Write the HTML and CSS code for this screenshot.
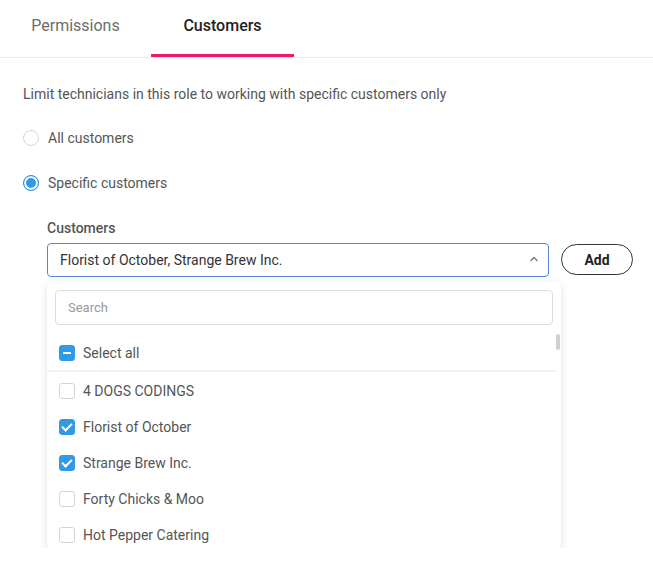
FILE: index.html
```html
<!DOCTYPE html>
<html lang="en">
  <head>
    <meta charset="UTF-8" />
    <meta name="viewport" content="width=device-width, initial-scale=1.0" />
    <title>Role Customers</title>
    <link rel="stylesheet" href="styles.css">
  </head>
  <body>
    <div class="tabs">
      <div class="tab">Permissions</div>
      <div class="tab active">Customers</div>
    </div>

    <section class="content">
      <p class="intro">Limit technicians in this role to working with specific customers only</p>

      <div class="radio">
        <span class="radio-dot"></span>
        All customers
      </div>
      <div class="radio">
        <span class="radio-dot checked"></span>
        Specific customers
      </div>

      <div class="field">
        <div class="field-label">Customers</div>
        <div class="field-row">
          <div class="picker">
            <div class="current">
              <span>Florist of October, Strange Brew Inc.</span>
              <svg class="chevron" width="10" height="6" viewBox="0 0 10 6">
                <path d="M1.5 5 L5 1.5 L8.5 5" fill="none" stroke="#777" stroke-width="1.3" />
              </svg>
            </div>
            <div class="dropdown">
              <div class="search">Search</div>
              <div class="option all-row">
                <span class="box partial"></span>
                Select all
              </div>
              <div class="list">
                <div class="option"><span class="box"></span>4 DOGS CODINGS</div>
                <div class="option"><span class="box checked"></span>Florist of October</div>
                <div class="option"><span class="box checked"></span>Strange Brew Inc.</div>
                <div class="option"><span class="box"></span>Forty Chicks &amp; Moo</div>
                <div class="option"><span class="box"></span>Hot Pepper Catering</div>
              </div>
              <div class="scroll-thumb"></div>
            </div>
          </div>
          <button class="add-btn">Add</button>
        </div>
      </div>
    </section>
  </body>
</html>
```

FILE: styles.css
```css
body {
  margin: 0;
  font-family: Roboto, "Liberation Sans", sans-serif;
  font-size: 14px;
  color: #555;
  background: #fff;
}

.tabs {
  display: flex;
  height: 57px;
  border-bottom: 1px solid #ececec;
}

.tab {
  display: flex;
  align-items: center;
  justify-content: center;
  padding-bottom: 6px;
  box-sizing: border-box;
  font-size: 16px;
  color: #6d6d6d;
  width: 151px;
}

.tab.active {
  width: 143px;
  color: #222;
  font-weight: 500;
  border-bottom: 3px solid #f0186c;
  padding-bottom: 3px;
}

.content {
  padding: 0 23px;
}

.intro {
  margin: 27px 0 26px;
  line-height: 18px;
}

.radio {
  display: flex;
  align-items: center;
  gap: 9px;
  height: 18px;
  margin-bottom: 27px;
}

.radio-dot {
  width: 14px;
  height: 14px;
  border: 1px solid #d6d6d6;
  border-radius: 50%;
}

.radio-dot.checked {
  border-color: #2f8fe0;
  background: #2f9be8;
  box-shadow: inset 0 0 0 2px #fff;
}

.field {
  margin-left: 24px;
  margin-top: 1px;
}

.field-label {
  font-weight: 500;
  color: #555;
  line-height: 18px;
  margin-bottom: 6px;
}

.field-row {
  display: flex;
  align-items: flex-start;
  gap: 12px;
}

.picker {
  flex: none;
  width: 502px;
}

.current {
  height: 34px;
  box-sizing: border-box;
  border: 1px solid #5b86d6;
  border-radius: 4px;
  display: flex;
  align-items: center;
  justify-content: space-between;
  padding: 0 9px 0 12px;
  color: #333;
}

.chevron {
  margin-top: -2px;
}

.dropdown {
  position: relative;
  width: 514px;
  margin-top: 5px;
  height: 266px;
  overflow: hidden;
  background: #fff;
  border-radius: 4px;
  box-shadow: 0 2px 8px rgba(0, 0, 0, 0.12);
}

.search {
  margin: 8px 8px 0;
  height: 35px;
  box-sizing: border-box;
  border: 1px solid #ddd;
  border-radius: 4px;
  padding: 0 12px;
  display: flex;
  align-items: center;
  color: #999;
  font-size: 13px;
}

.option {
  display: flex;
  align-items: center;
  gap: 8px;
  height: 36px;
  padding-left: 12px;
  color: #555;
}

.all-row {
  margin-top: 12px;
  margin-right: 5px;
  height: 35px;
  padding-bottom: 2px;
  border-bottom: 2px solid #f0f0f0;
  box-sizing: border-box;
}

.list {
  padding-top: 1px;
}

.box {
  width: 16px;
  height: 16px;
  box-sizing: border-box;
  border: 1px solid #d4d4d4;
  border-radius: 3px;
  position: relative;
}

.box.checked,
.box.partial {
  background: #2f9be8;
  border-color: #2f9be8;
}

.box.checked::after {
  content: "";
  position: absolute;
  left: 4px;
  top: 1px;
  width: 4px;
  height: 8px;
  border: solid #fff;
  border-width: 0 2px 2px 0;
  transform: rotate(45deg);
}

.box.partial::after {
  content: "";
  position: absolute;
  left: 3px;
  top: 6px;
  width: 8px;
  height: 2px;
  background: #fff;
}

.scroll-thumb {
  position: absolute;
  right: 1px;
  top: 52px;
  width: 4px;
  height: 16px;
  border-radius: 2px;
  background: #cfcfcf;
}

.add-btn {
  flex: none;
  margin-top: 1px;
  width: 72px;
  height: 31px;
  border: 1px solid #333;
  border-radius: 16px;
  background: #fff;
  font-family: Roboto, "Liberation Sans", sans-serif;
  font-size: 14px;
  font-weight: 700;
  color: #222;
  cursor: pointer;
}
```
